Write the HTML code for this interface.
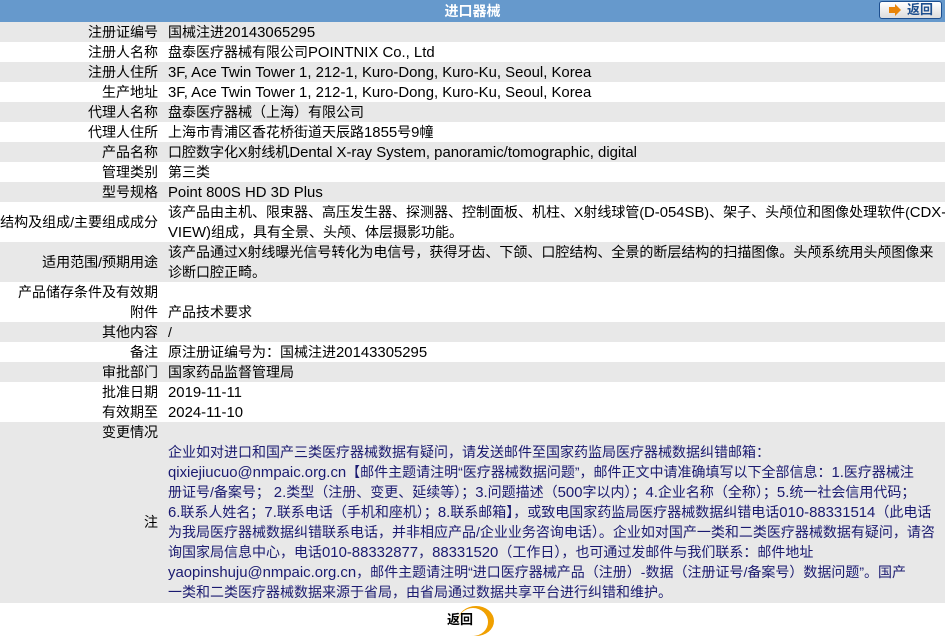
<!DOCTYPE html>
<html><head><meta charset="utf-8"><style>
*{margin:0;padding:0;box-sizing:border-box}
body{width:945px;height:636px;background:#fff;font-family:"Liberation Sans","Noto Sans CJK SC",sans-serif;font-size:14px;color:#000;overflow:hidden;position:relative}
.e{font-size:14.9px;line-height:10px}
.hdr{height:22px;background:#6699cc;color:#fff;font-weight:bold;text-align:center;line-height:22px;font-size:14px;position:relative}
.btn{position:absolute;left:879px;top:1px;width:63px;height:18px;border:1px solid #1d4f8f;border-radius:3px;background:linear-gradient(#fff,#ddd);color:#1d4f8f;font-weight:bold;line-height:16px;font-size:13px;text-align:left;padding-left:27px}
.btn:before{content:"";position:absolute;left:9px;top:5px;width:6px;height:6px;background:#e8850a}
.btn:after{content:"";position:absolute;left:15px;top:2px;border-left:6px solid #e8850a;border-top:6px solid transparent;border-bottom:6px solid transparent}
.row{display:flex;height:20px;line-height:20px;overflow:hidden}
.g{background:#e8e8e8}
.l{width:158px;text-align:right;flex:none;white-space:nowrap;overflow:visible;direction:rtl}
.v{padding-left:10px;flex:1;white-space:nowrap}
.v div{height:20px;line-height:20px}
.n{color:#1a1a70}
.bot{position:absolute;left:447px;top:609px;font-weight:bold;font-size:13px}
.circ{position:absolute;left:458px;top:606px;width:36px;height:30px;border-radius:50%;background:#f0a000}
.circ2{position:absolute;left:458px;top:608px;width:30px;height:28px;border-radius:50%;background:#fff}
</style></head><body>
<div class="hdr">进口器械<div class="btn">返回</div></div>
<div class="row g"><div class="l">注册证编号</div><div class="v">国械注进<span class="e">20143065295</span></div></div>
<div class="row"><div class="l">注册人名称</div><div class="v">盘泰医疗器械有限公司<span class="e">POINTNIX Co., Ltd</span></div></div>
<div class="row g"><div class="l">注册人住所</div><div class="v"><span class="e">3F, Ace Twin Tower 1, 212-1, Kuro-Dong, Kuro-Ku, Seoul, Korea</span></div></div>
<div class="row"><div class="l">生产地址</div><div class="v"><span class="e">3F, Ace Twin Tower 1, 212-1, Kuro-Dong, Kuro-Ku, Seoul, Korea</span></div></div>
<div class="row g"><div class="l">代理人名称</div><div class="v">盘泰医疗器械（上海）有限公司</div></div>
<div class="row"><div class="l">代理人住所</div><div class="v">上海市青浦区香花桥街道天辰路<span class="e">1855</span>号<span class="e">9</span>幢</div></div>
<div class="row g"><div class="l">产品名称</div><div class="v">口腔数字化X射线机<span class="e">Dental X-ray System, panoramic/tomographic, digital</span></div></div>
<div class="row"><div class="l">管理类别</div><div class="v">第三类</div></div>
<div class="row g"><div class="l">型号规格</div><div class="v"><span class="e">Point 800S HD 3D Plus</span></div></div>
<div class="row" style="height:40px;align-items:center"><div class="l">结构及组成/主要组成成分</div><div class="v"><div>该产品由主机、限束器、高压发生器、探测器、控制面板、机柱、X射线球管(<span class="e">D-054SB</span>)、架子、头颅位和图像处理软件(<span class="e">CDX-</span></div><div><span class="e">VIEW)</span>组成，具有全景、头颅、体层摄影功能。</div></div></div>
<div class="row g" style="height:40px;align-items:center"><div class="l">适用范围/预期用途</div><div class="v"><div>该产品通过X射线曝光信号转化为电信号，获得牙齿、下颌、口腔结构、全景的断层结构的扫描图像。头颅系统用头颅图像来</div><div>诊断口腔正畸。</div></div></div>
<div class="row"><div class="l">产品储存条件及有效期</div><div class="v"></div></div>
<div class="row"><div class="l">附件</div><div class="v">产品技术要求</div></div>
<div class="row g"><div class="l">其他内容</div><div class="v">/</div></div>
<div class="row"><div class="l">备注</div><div class="v">原注册证编号为：国械注进<span class="e">20143305295</span></div></div>
<div class="row g"><div class="l">审批部门</div><div class="v">国家药品监督管理局</div></div>
<div class="row"><div class="l">批准日期</div><div class="v"><span class="e">2019-11-11</span></div></div>
<div class="row"><div class="l">有效期至</div><div class="v"><span class="e">2024-11-10</span></div></div>
<div class="row g"><div class="l">变更情况</div><div class="v"></div></div>
<div class="row g" style="height:161px;align-items:center;padding-bottom:1px"><div class="l">注</div><div class="v n">
<div>企业如对进口和国产三类医疗器械数据有疑问，请发送邮件至国家药监局医疗器械数据纠错邮箱：</div>
<div><span class="e">qixiejiucuo@nmpaic.org.cn</span>【邮件主题请注明“医疗器械数据问题”，邮件正文中请准确填写以下全部信息：<span class="e">1.</span>医疗器械注</div>
<div>册证号/备案号； <span class="e">2.</span>类型（注册、变更、延续等）；<span class="e">3.</span>问题描述（<span class="e">500</span>字以内）；<span class="e">4.</span>企业名称（全称）；<span class="e">5.</span>统一社会信用代码；</div>
<div><span class="e">6.</span>联系人姓名；<span class="e">7.</span>联系电话（手机和座机）；<span class="e">8.</span>联系邮箱】，或致电国家药监局医疗器械数据纠错电话<span class="e">010-88331514</span>（此电话</div>
<div>为我局医疗器械数据纠错联系电话，并非相应产品/企业业务咨询电话）。企业如对国产一类和二类医疗器械数据有疑问，请咨</div>
<div>询国家局信息中心，电话<span class="e">010-88332877</span>，<span class="e">88331520</span>（工作日），也可通过发邮件与我们联系：邮件地址</div>
<div><span class="e">yaopinshuju@nmpaic.org.cn</span>，邮件主题请注明“进口医疗器械产品（注册）-数据（注册证号/备案号）数据问题”。国产</div>
<div>一类和二类医疗器械数据来源于省局，由省局通过数据共享平台进行纠错和维护。</div></div></div>
<div class="circ"></div><div class="circ2"></div>
<div class="bot">返回</div>
</body></html>
